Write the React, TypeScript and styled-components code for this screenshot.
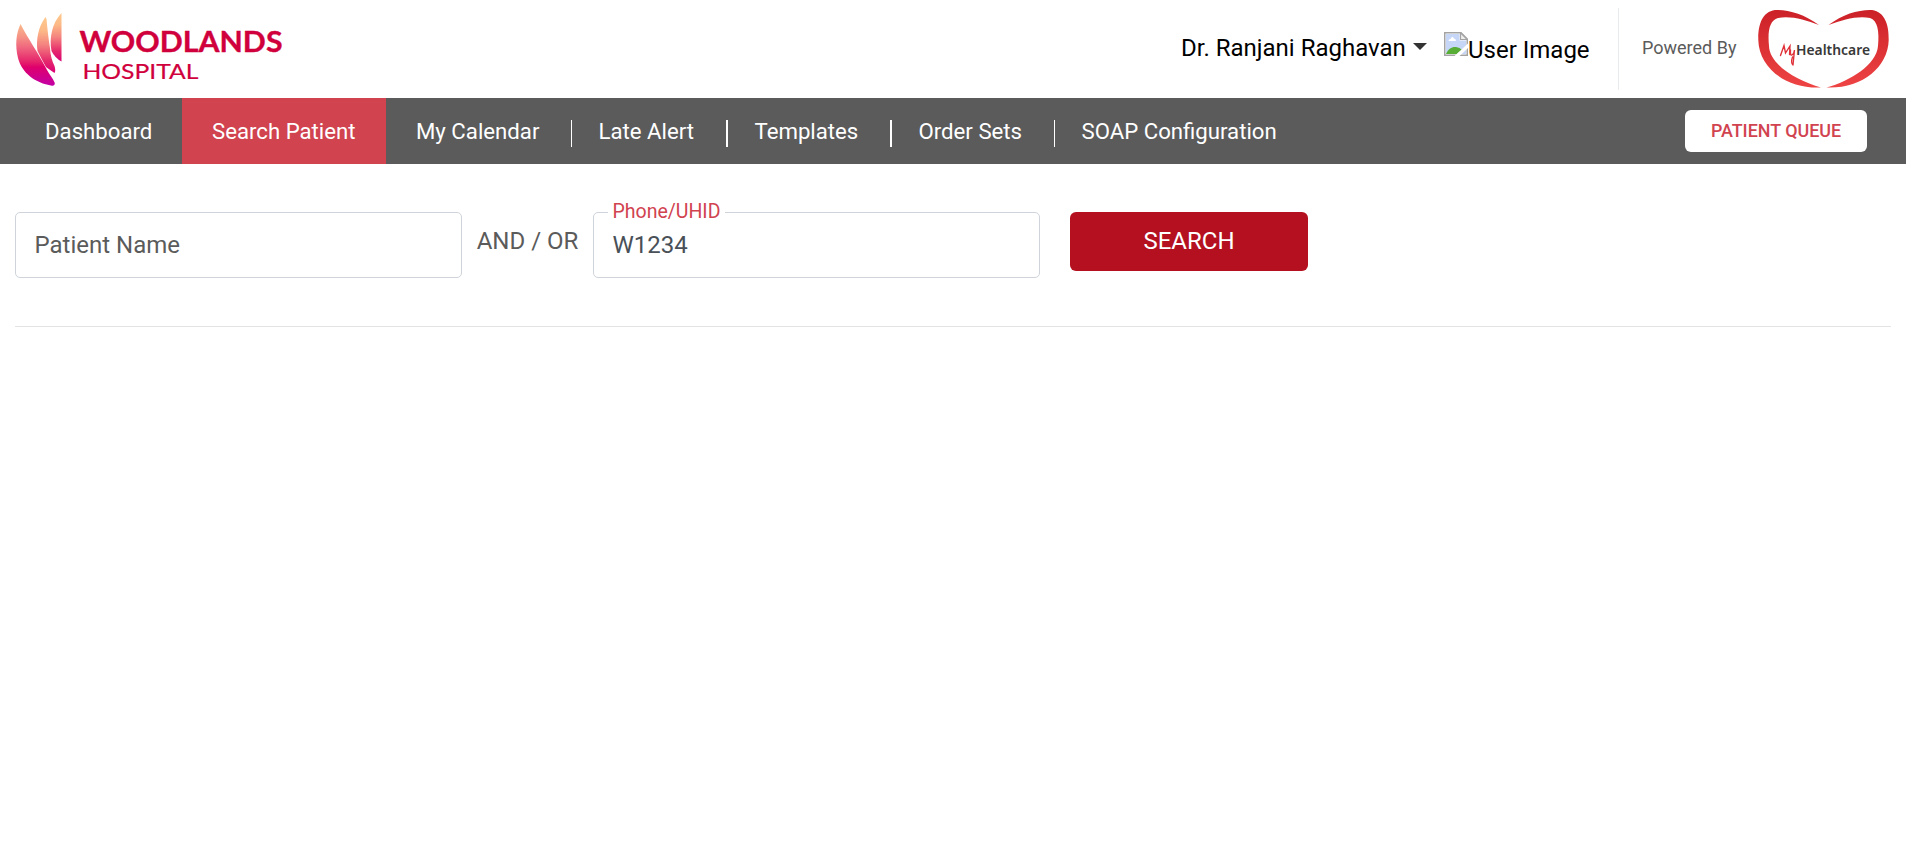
import React from "react";
import styled, { createGlobalStyle } from "styled-components";

const GlobalStyle = createGlobalStyle`
  * { box-sizing: border-box; }
  body {
    margin: 0;
    background: #fff;
    font-family: Roboto, "Liberation Sans", sans-serif;
    font-size: 24px;
    line-height: 30px;
    color: #5b5b5b;
  }
`;

const Page = styled.div`
  width: 1906px;
`;

const Header = styled.header`
  display: flex;
  justify-content: space-between;
  height: 98px;
  padding: 8px 15px 0;
`;

const HospitalLogo = styled.svg`
  display: block;
  width: 275px;
  height: 82px;
`;

const HeaderRight = styled.div`
  display: flex;
  height: 82px;
`;

const UserMenu = styled.div`
  display: flex;
  align-items: center;
  height: 82px;
  width: 437px;
  color: #000;
  white-space: nowrap;
`;

const UserName = styled.span`
  width: 232px;
  margin-top: -3px;
`;

const Caret = styled.span`
  border: 7.5px solid transparent;
  border-top-color: #333;
  border-bottom: 0;
  margin: -5px 17px 0 0;
`;

const MissingImage = styled.svg`
  width: 24px;
  height: 24px;
  margin-top: -10px;
`;

const UserAlt = styled.span`
  margin-top: 1px;
`;

const PoweredBy = styled.div`
  display: flex;
  align-items: center;
  width: 273px;
  padding-left: 23px;
  border-left: 1px solid #e9ecef;
  font-size: 18px;
`;

const PoweredText = styled.span`
  width: 116px;
  margin-top: -2px;
`;

const HeartLogo = styled.svg`
  width: 133px;
  height: 82px;
`;

const Nav = styled.nav`
  display: flex;
  align-items: center;
  height: 66px;
  padding-left: 15px;
  background: #5b5b5b;
  color: #fff;
  font-size: 22.2px;
`;

const NavItem = styled.a<{ $width: number; $active?: boolean }>`
  display: flex;
  align-items: center;
  width: ${(p) => p.$width}px;
  height: 66px;
  padding-left: 30px;
  background: ${(p) => (p.$active ? "#d1434f" : "transparent")};
  white-space: nowrap;
`;

const Divider = styled.span<{ $thickness: number }>`
  width: ${(p) => p.$thickness}px;
  height: 27px;
  margin: 5px 26.5px 0 -30px;
  background: #fff;
`;

const QueueButton = styled.button`
  width: 182px;
  height: 42px;
  margin: 0 39px 0 auto;
  padding: 0 0 1px;
  border: 0;
  border-radius: 6px;
  background: #fff;
  color: #d1434f;
  font: 500 17.9px Roboto, sans-serif;
`;

const SearchForm = styled.form`
  display: flex;
  height: 163px;
  margin: 0 15px;
  padding-top: 48px;
  border-bottom: 1px solid #e3e3e3;
`;

const Field = styled.fieldset`
  display: flex;
  align-items: center;
  position: relative;
  width: 447px;
  height: 66px;
  margin: 0;
  padding: 0 0 0 18.5px;
  border: 1px solid #ced4da;
  border-radius: 5px;
`;

const FieldLabel = styled.label`
  position: absolute;
  top: -16px;
  left: 14px;
  padding: 0 4.5px;
  background: #fff;
  color: #d1434f;
  font-size: 19.5px;
`;

const FieldText = styled.span<{ $typed?: boolean }>`
  padding-bottom: ${(p) => (p.$typed ? 0 : 1)}px;
  color: ${(p) => (p.$typed ? "#495057" : "#5b5b5b")};
`;

const Joiner = styled.span`
  width: 131px;
  padding-top: 14px;
  text-align: center;
`;

const SearchButton = styled.button`
  width: 238px;
  height: 59px;
  margin-left: 30px;
  padding: 0 0 1px;
  border: 0;
  border-radius: 6px;
  background: #b5101f;
  color: #fff;
  font: 400 24px Roboto, sans-serif;
`;

const links = [
  { label: "Dashboard", width: 167 },
  { label: "Search Patient", width: 204, active: true },
  { label: "My Calendar", width: 185 },
  { label: "Late Alert", width: 155, divider: 1 },
  { label: "Templates", width: 164, divider: 2 },
  { label: "Order Sets", width: 164, divider: 2 },
  { label: "SOAP Configuration", width: 260, divider: 1 },
];

function WoodlandsLogo() {
  return (
    <HospitalLogo viewBox="15 8 275 82">
      <defs>
        <linearGradient id="petal" x1="0" y1="0" x2="0" y2="1">
          <stop offset="0" stopColor="#fab98c" />
          <stop offset=".2" stopColor="#f69586" />
          <stop offset=".42" stopColor="#ee5c7c" />
          <stop offset=".62" stopColor="#e5206b" />
          <stop offset=".7" stopColor="#df006c" />
          <stop offset="1" stopColor="#c200a6" />
        </linearGradient>
        <linearGradient id="petalShort" x1="0" y1="0" x2="0" y2="1">
          <stop offset="0" stopColor="#fec98c" />
          <stop offset=".25" stopColor="#fcb886" />
          <stop offset=".5" stopColor="#f4827f" />
          <stop offset=".78" stopColor="#e52a6c" />
          <stop offset="1" stopColor="#da0075" />
        </linearGradient>
      </defs>
      <path fill="url(#petal)" d="M20.500 24C27 37 39 54 47 70C49 74 53 78 54.800 83Q54.800 86 52 85.700C35 83 22 73 18 58C15 45 16 34 20.500 24Z" />
      <path fill="url(#petalShort)" d="M45.500 17C38 27 36 40 37.500 51Q42 60 46 67Q50 70 54.500 73Q56 71 54.500 66Q50.500 58 50 48Q48 36 46.500 19Z" />
      <path fill="url(#petalShort)" d="M61.500 13C52 23 49 38 51.500 51Q55 58 61.500 61.500Z" />
      <g fill="#d0003c" fontFamily="Lato, sans-serif">
        <text x="79.500" y="52" fontSize="28.300" fontWeight="700" textLength="203" lengthAdjust="spacingAndGlyphs" stroke="#d0003c" strokeWidth=".35">WOODLANDS</text>
        <text x="82.500" y="78.600" fontSize="21.600" textLength="116" lengthAdjust="spacingAndGlyphs" stroke="#d0003c" strokeWidth=".2">HOSPITAL</text>
      </g>
    </HospitalLogo>
  );
}

function MyHealthcareLogo() {
  return (
    <HeartLogo viewBox="1758 8 133 82">
      <defs>
        <linearGradient id="heart" x1="0" y1="0" x2="0" y2="1">
          <stop offset="0" stopColor="#cb2027" />
          <stop offset="1" stopColor="#ef4444" />
        </linearGradient>
      </defs>
      <path fill="url(#heart)" d="M1819 25C1804 14 1788 9.500 1775 10C1762 12 1758 25 1758.300 40C1759 68 1786 89 1821 87.500C1798 81 1769.500 65 1769 46C1767.500 31 1769.500 20.500 1778 18C1790 15.500 1805 19.500 1819 25Z" />
      <path fill="url(#heart)" d="M1828.500 25C1843 14 1859 9.500 1872 10C1885 12 1889 25 1888.700 40C1888 68 1861 89 1826.500 87.500C1850 81 1876.500 65 1878 46C1879.500 31 1877.500 20.500 1870 18C1858 15.500 1843 19.500 1828.500 25Z" />
      <path fill="none" stroke="#df3037" strokeWidth="1.350" strokeLinecap="round" d="M1780.500 55.500L1784 45.500L1785.500 53L1790 46L1789.500 54.500M1790.500 50Q1790 56 1792 55Q1794 54 1794.500 50L1793 65M1792.500 57Q1790.500 63 1793 65" />
      <text x="1796" y="54.700" fontFamily="'Noto Sans', sans-serif" fontSize="15" fontWeight="600" fill="#383838" textLength="74" lengthAdjust="spacingAndGlyphs">Healthcare</text>
    </HeartLogo>
  );
}

function BrokenImage() {
  return (
    <MissingImage viewBox="0 0 24 24">
      <path d="M.75.75H17L23.250 7V23.250H.75Z" fill="#fff" stroke="#a3a3a3" strokeWidth="1.500" />
      <path d="M2 2H15.500V8.500H22V22H2Z" fill="#c6d6f7" />
      <path d="M2 22C4 17 8 14.500 12 15Q16 15.500 18 18L13 22Z" fill="#57ad36" />
      <path d="M4.500 9Q4.500 7 6.500 7Q8 3.500 10 6.500Q12 6.500 12 9Z" fill="#fff" />
      <path d="M16.500.75V7.500H23.250Z" fill="#eee" stroke="#a3a3a3" strokeWidth="1.200" />
      <path d="M24 11.500L10.500 24H15.500L24 16Z" fill="#fff" />
    </MissingImage>
  );
}

export default function App() {
  return (
    <Page>
      <GlobalStyle />
      <Header>
        <WoodlandsLogo />
        <HeaderRight>
          <UserMenu>
            <UserName>Dr. Ranjani Raghavan</UserName>
            <Caret />
            <BrokenImage />
            <UserAlt>User Image</UserAlt>
          </UserMenu>
          <PoweredBy>
            <PoweredText>Powered By</PoweredText>
            <MyHealthcareLogo />
          </PoweredBy>
        </HeaderRight>
      </Header>
      <Nav>
        {links.map((link) => (
          <NavItem key={link.label} $width={link.width} $active={link.active}>
            {link.divider && <Divider $thickness={link.divider} />}
            {link.label}
          </NavItem>
        ))}
        <QueueButton>PATIENT QUEUE</QueueButton>
      </Nav>
      <SearchForm>
        <Field>
          <FieldText>Patient Name</FieldText>
        </Field>
        <Joiner>AND / OR</Joiner>
        <Field>
          <FieldLabel>Phone/UHID</FieldLabel>
          <FieldText $typed>W1234</FieldText>
        </Field>
        <SearchButton type="button">SEARCH</SearchButton>
      </SearchForm>
    </Page>
  );
}
